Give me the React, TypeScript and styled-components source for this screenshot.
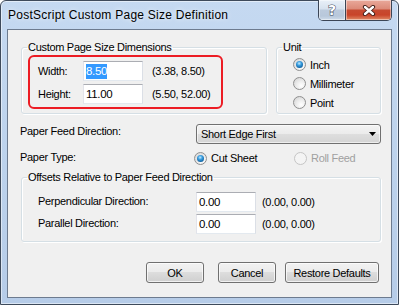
import React from "react";
import styled, { createGlobalStyle } from "styled-components";

const GlobalStyle = createGlobalStyle`
  html, body { margin: 0; padding: 0; background: #ffffff; }
  body {
    font-family: "Liberation Sans", Arial, sans-serif;
    font-size: 11px;
    letter-spacing: -0.3px;
    color: #000;
  }
`;

const Window = styled.div`
  box-sizing: border-box;
  width: 399px;
  height: 305px;
  display: flex;
  flex-direction: column;
  border: 1px solid #3e4a5b;
  border-radius: 6px 6px 0 0;
  background: linear-gradient(180deg, #c5d9f1 0%, #bcd2ec 55%, #b6cce8 100%);
  box-shadow: inset 0 0 0 1px rgba(255, 255, 255, 0.5);
`;

const TitleBar = styled.div`
  height: 28px;
  flex-shrink: 0;
  display: flex;
  align-items: flex-start;
  padding: 0 6px 0 7px;
`;

const Title = styled.div`
  flex: 1;
  margin-top: 7px;
  font-size: 12px;
  letter-spacing: 0.25px;
  line-height: 15px;
  text-shadow: 0 0 5px rgba(255, 255, 255, 0.9);
`;

const CaptionButtons = styled.div`
  display: flex;
  margin-top: -1px;
  border: 1px solid #3b4556;
  border-top: none;
  border-radius: 0 0 5px 5px;
  overflow: hidden;
`;

const CaptionButton = styled.div<{ $w: number; $close?: boolean }>`
  width: ${(p) => p.$w}px;
  height: 20px;
  display: flex;
  align-items: center;
  justify-content: center;
  box-shadow: inset 0 0 0 1px rgba(255, 255, 255, 0.45);
  background: ${(p) =>
    p.$close
      ? "linear-gradient(180deg, #e9a99b 0%, #dc8a78 45%, #c64a31 50%, #c9442a 75%, #e08a66 100%)"
      : "linear-gradient(180deg, #e9f0f8 0%, #d6e1ee 45%, #bccbdd 50%, #b8c8db 80%, #cfdcea 100%)"};
  & + & {
    border-left: 1px solid #3b4556;
  }
`;

const HelpGlyph = styled.span`
  font-family: "DejaVu Sans", sans-serif;
  font-weight: bold;
  font-size: 14px;
  line-height: 14px;
  letter-spacing: 0;
  color: #fff;
  -webkit-text-stroke: 1px #3d4858;
  paint-order: stroke fill;
`;

const Client = styled.div`
  flex: 1;
  margin: 0 6px 6px;
  border: 1px solid #6d7b8f;
  background: #f0f0f0;
  display: flex;
  flex-direction: column;
  padding: 11px 0 0 12px;
`;

const TopRow = styled.div`
  display: flex;
  gap: 9px;
  margin-left: 1px;
`;

const Group = styled.fieldset<{ $w: number; $pb?: number }>`
  box-sizing: border-box;
  width: ${(p) => p.$w}px;
  margin: 0;
  padding: 0 6px ${(p) => p.$pb ?? 4}px;
  min-width: 0;
  border: 1px solid #d5dfe5;
  border-radius: 3px;
  box-shadow: inset 1px 1px 0 #ffffff, 1px 1px 0 #ffffff;
`;

const Legend = styled.legend`
  padding: 0 1px;
  margin-left: -1px;
  line-height: 13px;
`;

const Highlight = styled.div`
  box-sizing: border-box;
  width: 195px;
  margin-top: 1px;
  border: 2px solid #ec1c24;
  border-radius: 6px;
  padding: 4px 0 3px 8px;
  display: flex;
  flex-direction: column;
  gap: 3px;
`;

const FieldRow = styled.div`
  display: flex;
  align-items: center;
  height: 20px;
`;

/* $lift raises the caption above the control's centre line, as the dialog does */
const FieldLabel = styled.span<{ $w: number; $lift?: number }>`
  width: ${(p) => p.$w}px;
  flex-shrink: 0;
  margin-bottom: ${(p) => (p.$lift ?? 0) * 2}px;
`;

const TextBox = styled.div<{ $w: number }>`
  box-sizing: border-box;
  width: ${(p) => p.$w}px;
  height: 20px;
  flex-shrink: 0;
  background: #ffffff;
  border: 1px solid #e3e9ef;
  border-top-color: #abadb3;
  border-left-color: #e2e3ea;
  border-right-color: #dbdfe6;
  padding: 0 2px;
  display: flex;
  align-items: center;
  font-size: 11.5px;
`;

const Selected = styled.span`
  background: #3399ff;
  color: #ffffff;
  line-height: 15px;
`;

const Range = styled.span<{ $gap: number }>`
  margin-left: ${(p) => p.$gap}px;
`;

const RadioList = styled.div`
  margin-top: 1px;
  padding-left: 10px;
  display: flex;
  flex-direction: column;
`;

const RadioOption = styled.label<{ $w?: number; $disabled?: boolean }>`
  display: flex;
  align-items: center;
  gap: 4px;
  height: 19px;
  width: ${(p) => (p.$w ? `${p.$w}px` : "auto")};
  color: ${(p) => (p.$disabled ? "#a0a0a0" : "#000")};
`;

const RadioDot = styled.span<{ $checked?: boolean; $disabled?: boolean }>`
  position: relative;
  box-sizing: border-box;
  width: 13px;
  height: 13px;
  flex-shrink: 0;
  border-radius: 50%;
  border: 1px solid ${(p) => (p.$disabled ? "#c5c5c5" : "#8f8f8f")};
  background: ${(p) =>
    p.$disabled
      ? "#f4f4f4"
      : "radial-gradient(circle at 65% 70%, #ffffff 0%, #eeeeee 40%, #cfcfcf 100%)"};
  &::after {
    content: "";
    display: ${(p) => (p.$checked ? "block" : "none")};
    position: absolute;
    inset: 2px;
    border-radius: 50%;
    background: radial-gradient(circle at 45% 35%, #c5ecff 0%, #3a9ee0 35%, #0b5a98 80%, #124b7a 100%);
  }
`;

const FormRow = styled.div<{ $top: number }>`
  display: flex;
  align-items: center;
  height: 20px;
  margin-top: ${(p) => p.$top}px;
`;

const Combo = styled.div`
  box-sizing: border-box;
  width: 185px;
  height: 20px;
  border: 1px solid #707070;
  border-radius: 3px;
  background: linear-gradient(180deg, #f3f3f3 0%, #ebebeb 50%, #dedede 50%, #d4d4d4 100%);
  box-shadow: inset 0 0 0 1px rgba(255, 255, 255, 0.6);
  display: flex;
  align-items: center;
  justify-content: space-between;
  padding: 0 4px 0 4px;
`;

const RadioRow = styled.div`
  display: flex;
  margin-left: -2px;
`;

const OffsetsGroup = styled(Group)`
  margin: 3px 0 0 1px;
  padding-bottom: 7px;
`;

const OffsetRows = styled.div`
  margin-top: 8px;
  padding-left: 10px;
  display: flex;
  flex-direction: column;
  gap: 2px;
`;

const ButtonRow = styled.div`
  display: flex;
  justify-content: flex-end;
  margin-top: 20px;
  padding-right: 12px;
`;

const PushButton = styled.button<{ $w: number; $gap?: number }>`
  box-sizing: border-box;
  width: ${(p) => p.$w}px;
  height: 21px;
  margin: 0 0 0 ${(p) => p.$gap ?? 0}px;
  padding: 0;
  font-family: inherit;
  font-size: 11px;
  letter-spacing: inherit;
  color: #000;
  border: 1px solid #707070;
  border-radius: 3px;
  background: linear-gradient(180deg, #f2f2f2 0%, #ebebeb 50%, #dddddd 50%, #cfcfcf 100%);
  box-shadow: inset 0 0 0 1px rgba(255, 255, 255, 0.7);
`;

const Radio = ({ label, checked, disabled, w }: { label: string; checked?: boolean; disabled?: boolean; w?: number }) => (
  <RadioOption $w={w} $disabled={disabled}>
    <RadioDot $checked={checked} $disabled={disabled} />
    {label}
  </RadioOption>
);

const App = () => (
  <>
    <GlobalStyle />
    <Window>
      <TitleBar>
        <Title>PostScript Custom Page Size Definition</Title>
        <CaptionButtons>
          <CaptionButton $w={26}>
            <HelpGlyph>?</HelpGlyph>
          </CaptionButton>
          <CaptionButton $w={45} $close>
            <svg width="14" height="11" viewBox="0 0 14 11">
              <path d="M3 2 L11 9 M11 2 L3 9" stroke="#3c1a14" strokeWidth="4.2" strokeLinecap="round" />
              <path d="M3 2 L11 9 M11 2 L3 9" stroke="#ffffff" strokeWidth="2.4" strokeLinecap="round" />
            </svg>
          </CaptionButton>
        </CaptionButtons>
      </TitleBar>
      <Client>
        <TopRow>
          <Group $w={246}>
            <Legend>Custom Page Size Dimensions</Legend>
            <Highlight>
              <FieldRow>
                <FieldLabel $w={45}>Width:</FieldLabel>
                <TextBox $w={60}>
                  <Selected>8.50</Selected>
                </TextBox>
                <Range $gap={9}>(3.38, 8.50)</Range>
              </FieldRow>
              <FieldRow>
                <FieldLabel $w={45}>Height:</FieldLabel>
                <TextBox $w={60}>11.00</TextBox>
                <Range $gap={9}>(5.50, 52.00)</Range>
              </FieldRow>
            </Highlight>
          </Group>
          <Group $w={105} $pb={0}>
            <Legend>Unit</Legend>
            <RadioList>
              <Radio label="Inch" checked />
              <Radio label="Millimeter" />
              <Radio label="Point" />
            </RadioList>
          </Group>
        </TopRow>

        <FormRow $top={10}>
          <FieldLabel $w={176} $lift={3}>Paper Feed Direction:</FieldLabel>
          <Combo>
            <span>Short Edge First</span>
            <svg width="7" height="4" viewBox="0 0 7 4">
              <polygon points="0,0 7,0 3.5,4" fill="#000" />
            </svg>
          </Combo>
        </FormRow>
        <FormRow $top={4}>
          <FieldLabel $w={176} $lift={1}>Paper Type:</FieldLabel>
          <RadioRow>
            <Radio label="Cut Sheet" checked w={100} />
            <Radio label="Roll Feed" disabled />
          </RadioRow>
        </FormRow>

        <OffsetsGroup $w={360}>
          <Legend>Offsets Relative to Paper Feed Direction</Legend>
          <OffsetRows>
            <FieldRow>
              <FieldLabel $w={158} $lift={1}>Perpendicular Direction:</FieldLabel>
              <TextBox $w={60}>0.00</TextBox>
              <Range $gap={6}>(0.00, 0.00)</Range>
            </FieldRow>
            <FieldRow>
              <FieldLabel $w={158} $lift={1}>Parallel Direction:</FieldLabel>
              <TextBox $w={60}>0.00</TextBox>
              <Range $gap={6}>(0.00, 0.00)</Range>
            </FieldRow>
          </OffsetRows>
        </OffsetsGroup>

        <ButtonRow>
          <PushButton $w={58}>OK</PushButton>
          <PushButton $w={58} $gap={14}>Cancel</PushButton>
          <PushButton $w={94} $gap={9}>Restore Defaults</PushButton>
        </ButtonRow>
      </Client>
    </Window>
  </>
);

export default App;
